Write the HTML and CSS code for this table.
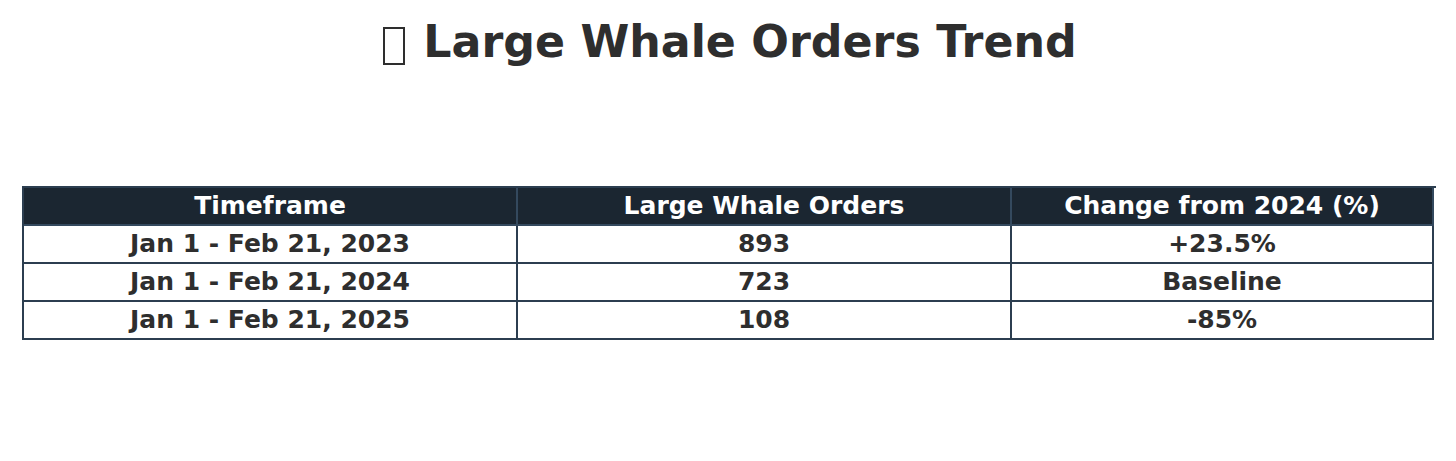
FILE: index.html
```html
<!DOCTYPE html>
<html>
<head>
<meta charset="utf-8">
<link rel="stylesheet" href="styles.css">
</head>
<body>
<div class="page">
  <h1 class="title"><span class="tofu"></span>Large Whale Orders Trend</h1>
  <div class="table">
    <div class="cell head">Timeframe</div>
    <div class="cell head">Large Whale Orders</div>
    <div class="cell head">Change from 2024 (%)</div>
    <div class="cell">Jan 1 - Feb 21, 2023</div>
    <div class="cell">893</div>
    <div class="cell">+23.5%</div>
    <div class="cell">Jan 1 - Feb 21, 2024</div>
    <div class="cell">723</div>
    <div class="cell">Baseline</div>
    <div class="cell">Jan 1 - Feb 21, 2025</div>
    <div class="cell">108</div>
    <div class="cell">-85%</div>
  </div>
</div>
</body>
</html>
```

FILE: styles.css
```css
html, body {
  margin: 0;
  padding: 0;
  background: #ffffff;
}
.page {
  width: 1456px;
  height: 461px;
  padding: 0 22px;
  box-sizing: border-box;
  font-family: "DejaVu Sans", sans-serif;
  font-weight: bold;
  color: #2e2e2e;
}
.title {
  margin: 0;
  padding-top: 16px;
  padding-left: 4px;
  height: 186px;
  box-sizing: border-box;
  text-align: center;
  font-size: 44.3px;
  line-height: 52px;
  font-weight: bold;
  color: #2e2e2e;
}
.tofu {
  display: inline-block;
  width: 18px;
  height: 34px;
  border: 2px solid #2e2e2e;
  margin-right: 18px;
  vertical-align: -8px;
}
.table {
  display: grid;
  grid-template-columns: 494px 494px 422px;
  width: 1412px;
  border-top: 2px solid #2c3e50;
  border-left: 2px solid #2c3e50;
}
.cell {
  height: 38px;
  box-sizing: border-box;
  border-right: 2px solid #2c3e50;
  border-bottom: 2px solid #2c3e50;
  display: flex;
  align-items: center;
  justify-content: center;
  font-size: 25px;
  line-height: 1;
  padding-bottom: 1px;
  background: #ffffff;
}
.head {
  background: #1b2631;
  color: #ffffff;
  border-bottom-color: #34495e;
  border-right-color: #34495e;
}
```
